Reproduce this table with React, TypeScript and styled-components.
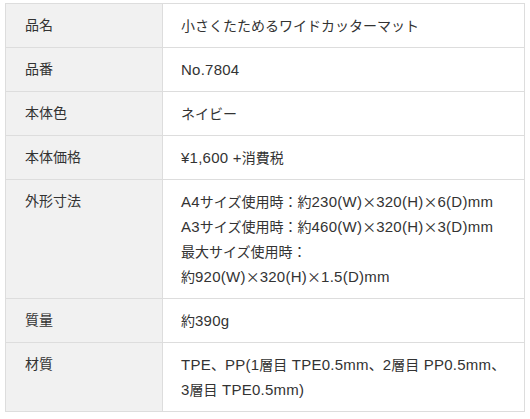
import React from 'react';
import styled, { createGlobalStyle } from 'styled-components';

const GlobalStyle = createGlobalStyle`
  body {
    margin: 0;
    background: #fff;
    font-family: "Liberation Sans", "Noto Sans CJK JP", sans-serif;
    color: #333;
  }
`;

const Wrapper = styled.div`
  padding: 3px 5px;
`;

const SpecTable = styled.table`
  width: 520px;
  border-collapse: collapse;
  line-height: 25px;
`;

const Label = styled.th`
  width: 119px;
  padding: 9px 18px 9px 19px;
  background: #f1f1f1;
  border: 1px solid #ddd;
  font-size: 14px;
  font-weight: normal;
  text-align: left;
  vertical-align: top;
`;

const Value = styled.td`
  padding: 9px 18px;
  border: 1px solid #ddd;
  font-size: 15px;
  letter-spacing: 0.25px;
  vertical-align: top;
`;

/* 和文は 14px、欧文は少し大きめ */
const Jp = styled.span`
  font-family: "Noto Sans CJK JP", sans-serif;
  font-size: 14px;
  letter-spacing: 0;
`;

const CJK = /([\u3000-\u30ff\u4e00-\u9fff\uff00-\uffef×]+)/;

const mixed = (text: string) =>
  text
    .split(CJK)
    .filter(Boolean)
    .map((part, i) => (CJK.test(part) ? <Jp key={i}>{part}</Jp> : part));

const rows: [string, string[]][] = [
  ['品名', ['小さくたためるワイドカッターマット']],
  ['品番', ['No.7804']],
  ['本体色', ['ネイビー']],
  ['本体価格', ['¥1,600 +消費税']],
  [
    '外形寸法',
    [
      'A4サイズ使用時：約230(W)×320(H)×6(D)mm',
      'A3サイズ使用時：約460(W)×320(H)×3(D)mm',
      '最大サイズ使用時：',
      '約920(W)×320(H)×1.5(D)mm',
    ],
  ],
  ['質量', ['約390g']],
  ['材質', ['TPE、PP(1層目 TPE0.5mm、2層目 PP0.5mm、3層目 TPE0.5mm)']],
];

const App: React.FC = () => {
  return (
    <Wrapper>
      <GlobalStyle />
      <SpecTable>
        <tbody>
          {rows.map(([label, lines]) => (
            <tr key={label}>
              <Label>{label}</Label>
              <Value>
                {lines.map((line, i) => (
                  <React.Fragment key={i}>
                    {i > 0 && <br />}
                    {mixed(line)}
                  </React.Fragment>
                ))}
              </Value>
            </tr>
          ))}
        </tbody>
      </SpecTable>
    </Wrapper>
  );
};

export default App;
